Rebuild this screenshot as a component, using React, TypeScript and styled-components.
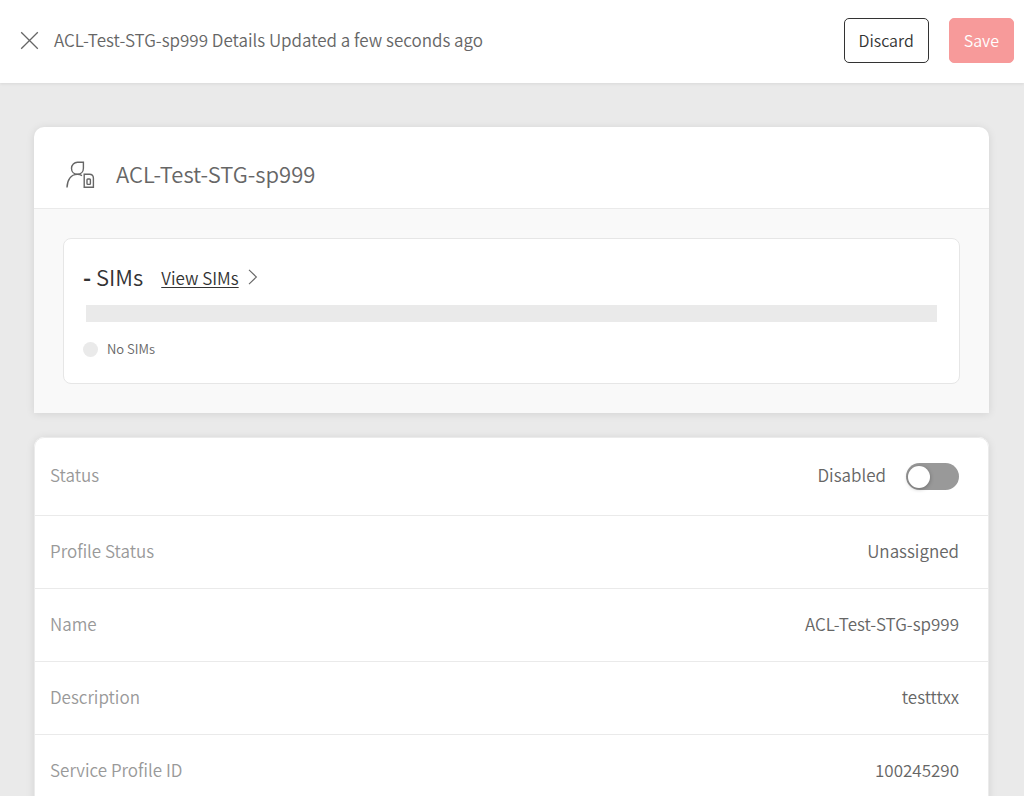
import React, { useState } from "react";
import styled, { createGlobalStyle } from "styled-components";

const GlobalStyle = createGlobalStyle`
  * { box-sizing: border-box; }
  body {
    margin: 0;
    background: #eaeaea;
    color: #666;
    font-family: "Noto Sans CJK SC", "Noto Sans", sans-serif;
    font-size: 17px;
    font-weight: 350;
    line-height: 24px;
  }
  button, input { font: inherit; }
`;

const TopBar = styled.header`
  display: flex;
  align-items: center;
  min-height: 83px;
  padding: 0 10px 2px 20px;
  background: #fff;
  box-shadow: 0 1px 3px rgba(0, 0, 0, 0.08);
`;

const CloseButton = styled.button`
  display: flex;
  padding: 0;
  border: 0;
  background: none;
  color: #666;
  cursor: pointer;
`;

const TopTitle = styled.h1`
  flex: 1;
  margin: 0 0 0 14px;
  padding-bottom: 2px;
  font-size: 17px;
  font-weight: 350;
`;

const Actions = styled.div`
  display: flex;
  gap: 20px;
`;

const ActionButton = styled.button<{ $primary?: boolean }>`
  height: 45px;
  padding: 0 14px 1px;
  border: 1px solid ${(p) => (p.$primary ? "#f79a9a" : "#333")};
  border-radius: 5px;
  background: ${(p) => (p.$primary ? "#f79a9a" : "#fff")};
  color: ${(p) => (p.$primary ? "#fff" : "#333")};
  font-size: 16px;
  cursor: pointer;
`;

const Content = styled.main`
  display: flex;
  flex-direction: column;
  gap: 24px;
  padding: 44px 35px 24px 34px;
`;

const Card = styled.section<{ $flatBottom?: boolean }>`
  overflow: hidden;
  border-radius: ${(p) => (p.$flatBottom ? "10px 10px 0 0" : "10px")};
  background: #fff;
  box-shadow: 0 1px 8px rgba(0, 0, 0, 0.1);
`;

const CardHead = styled.div`
  display: flex;
  align-items: center;
  gap: 20px;
  height: 82px;
  padding: 14px 32px 0;
  border-bottom: 1px solid #eaeaea;
`;

const CardTitle = styled.h2`
  margin: 0;
  padding-bottom: 3px;
  font-size: 22px;
  font-weight: 350;
`;

const CardBody = styled.div`
  padding: 29px;
  background: #f9f9f9;
`;

const SimPanel = styled.div`
  height: 146px;
  padding: 24px 22px 0 19px;
  border: 1px solid #e6e6e6;
  border-radius: 8px;
  background: #fff;
`;

const SimHead = styled.div`
  display: flex;
  align-items: center;
  height: 30px;
  color: #333;
`;

const SimCount = styled.h3`
  margin: 0 18px 0 0;
  padding-bottom: 5px;
  font-size: 22px;
  font-weight: 350;

  strong { font-weight: 700; }
`;

const SimLink = styled.a`
  display: flex;
  align-items: center;
  gap: 8px;
  color: #333;
  text-decoration: none;

  span {
    text-decoration: underline;
    text-underline-offset: 2px;
    text-decoration-thickness: 1px;
  }
`;

const UsageBar = styled.div`
  height: 17px;
  margin: 12px 0 0 3px;
  background: #eaeaea;
`;

const Legend = styled.div`
  display: flex;
  align-items: center;
  gap: 9px;
  margin-top: 15px;
  font-size: 13px;
`;

const LegendDot = styled.span`
  width: 15px;
  height: 15px;
  border-radius: 50%;
  background: #eaeaea;
`;

const Details = styled.dl`
  margin: 0;
  border: 1px solid #ebebeb;
  border-radius: 10px;
`;

const DetailRow = styled.div<{ $tall?: boolean }>`
  display: flex;
  align-items: center;
  justify-content: space-between;
  height: ${(p) => (p.$tall ? "78px" : "73px")};
  padding: 0 29px 0 15px;
  border-bottom: 1px solid #eaeaea;

  &:last-child { border-bottom: 0; }
`;

const Term = styled.dt`
  padding-bottom: 3px;
  color: #999;
`;

const Value = styled.dd<{ $control?: boolean }>`
  margin: 0;
  padding-bottom: ${(p) => (p.$control ? "0" : "3px")};
`;

const SwitchLabel = styled.label`
  display: flex;
  align-items: center;
  gap: 20px;
`;

const SwitchText = styled.span`
  padding-bottom: 3px;
`;

const Switch = styled.input`
  appearance: none;
  display: flex;
  align-items: center;
  width: 53px;
  height: 27px;
  margin: 0;
  padding: 0 2px;
  border-radius: 14px;
  background: #999;
  cursor: pointer;

  &::before {
    content: "";
    width: 22px;
    height: 22px;
    border-radius: 50%;
    background: #fff;
    box-shadow: 0 1px 4px rgba(0, 0, 0, 0.3);
  }

  &:checked {
    justify-content: flex-end;
    background: #007c92;
  }
`;

const CloseIcon = () => (
  <svg width="20" height="20" viewBox="0 0 20 20" fill="none" stroke="currentColor" strokeWidth="1.3" aria-hidden="true">
    <path d="M1.2 1.2 17.8 17.8M17.8 1.2 1.2 17.8" />
  </svg>
);

const ProfileIcon = () => (
  <svg width="30" height="30" viewBox="0 0 30 30" fill="none" stroke="#666" strokeWidth="1.4" aria-hidden="true">
    <path d="M17.4 2.2H11.5A6.2 6.2 0 0 0 5.5 8.2C5.5 11.8 8 14.3 11.3 14.3C15 14.3 17.4 11.8 17.4 8.2Z" />
    <path d="M1 27.6C1.2 20 4.8 14.4 11.3 14.4C13.1 14.4 14.7 14.8 16 15.6" />
    <path d="M18.2 14.2H23.4C25.8 14.2 27.4 15.8 27.4 18.2V27.2H18.2Z" />
    <rect x="21" y="19" width="3.4" height="5.4" rx="0.8" />
  </svg>
);

const ChevronIcon = () => (
  <svg width="12" height="18" viewBox="0 0 12 18" fill="none" stroke="#666" strokeWidth="1.1" aria-hidden="true">
    <path d="M2 .8 9.4 8 2 15.2" />
  </svg>
);

const details = [
  { term: "Profile Status", value: "Unassigned" },
  { term: "Name", value: "ACL-Test-STG-sp999" },
  { term: "Description", value: "testttxx" },
  { term: "Service Profile ID", value: "100245290" },
];

export default function App() {
  const [enabled, setEnabled] = useState(false);

  return (
    <>
      <GlobalStyle />
      <TopBar>
        <CloseButton type="button" aria-label="Close">
          <CloseIcon />
        </CloseButton>
        <TopTitle>ACL-Test-STG-sp999 Details Updated a few seconds ago</TopTitle>
        <Actions>
          <ActionButton type="button">Discard</ActionButton>
          <ActionButton type="button" $primary>Save</ActionButton>
        </Actions>
      </TopBar>
      <Content>
        <Card $flatBottom>
          <CardHead>
            <ProfileIcon />
            <CardTitle>ACL-Test-STG-sp999</CardTitle>
          </CardHead>
          <CardBody>
            <SimPanel>
              <SimHead>
                <SimCount><strong>-</strong> SIMs</SimCount>
                <SimLink href="#sims">
                  <span>View SIMs</span>
                  <ChevronIcon />
                </SimLink>
              </SimHead>
              <UsageBar />
              <Legend>
                <LegendDot />
                No SIMs
              </Legend>
            </SimPanel>
          </CardBody>
        </Card>
        <Card>
          <Details>
            <DetailRow $tall>
              <Term>Status</Term>
              <Value $control>
                <SwitchLabel>
                  <SwitchText>{enabled ? "Enabled" : "Disabled"}</SwitchText>
                  <Switch
                    type="checkbox"
                    role="switch"
                    checked={enabled}
                    onChange={(e) => setEnabled(e.target.checked)}
                  />
                </SwitchLabel>
              </Value>
            </DetailRow>
            {details.map((d) => (
              <DetailRow key={d.term}>
                <Term>{d.term}</Term>
                <Value>{d.value}</Value>
              </DetailRow>
            ))}
          </Details>
        </Card>
      </Content>
    </>
  );
}
